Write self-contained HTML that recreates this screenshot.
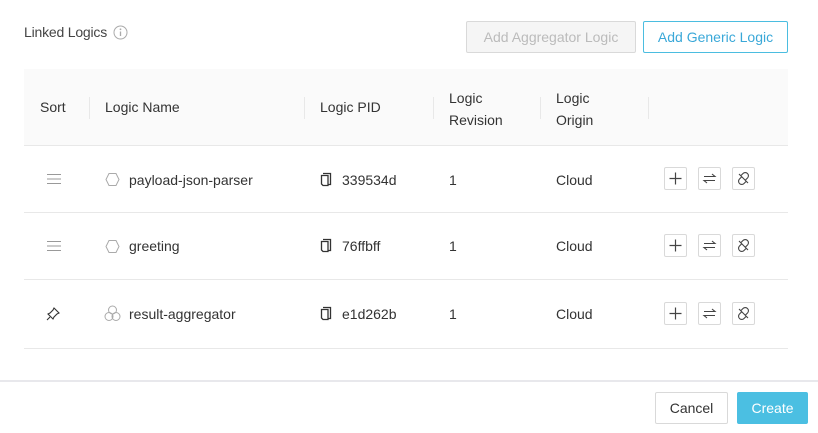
<!DOCTYPE html>
<html><head><style>
*{margin:0;padding:0;box-sizing:border-box}
body{width:818px;height:433px;background:#fff;font-family:"Liberation Sans",sans-serif;font-size:14px;color:#333;position:relative;overflow:hidden}
.a{position:absolute;white-space:nowrap}
.btn{position:absolute;border:1px solid #d9d9d9;border-radius:2px;text-align:center;font-size:14px}
.hd{position:absolute;left:24px;top:69px;width:764px;height:77px;background:#fafafa;border-bottom:1px solid #e8e8e8}
.dv{position:absolute;top:97px;width:1px;height:22px;background:#e8e8e8}
.row{position:absolute;left:24px;width:764px;border-bottom:1px solid #e8e8e8}
.ib{position:absolute;width:23px;height:23px;border:1px solid #d9d9d9;border-radius:2px;background:#fff}
</style></head><body>
<div class="a" style="left:24px;top:24px;font-size:14px;color:#444;letter-spacing:-0.2px">Linked Logics</div>
<svg class="a" style="left:113px;top:25px" width="15" height="15" viewBox="0 0 15 15"><circle cx="7.5" cy="7.5" r="6.5" fill="none" stroke="#aaa"/><line x1="7.5" y1="6.5" x2="7.5" y2="11" stroke="#aaa" stroke-width="1.3"/><circle cx="7.5" cy="4.3" r=".9" fill="#aaa"/></svg>
<div class="btn" style="left:466px;top:21px;width:170px;height:32px;line-height:30px;background:#f5f5f5;color:#bbb">Add Aggregator Logic</div>
<div class="btn" style="left:643px;top:21px;width:145px;height:32px;line-height:30px;border-color:#4bbde0;color:#3aa8d8">Add Generic Logic</div>
<div class="hd"></div>
<div class="a" style="left:40px;top:99px">Sort</div>
<div class="dv" style="left:89px"></div>
<div class="a" style="left:105px;top:99px">Logic Name</div>
<div class="dv" style="left:304px"></div>
<div class="a" style="left:320px;top:99px">Logic PID</div>
<div class="dv" style="left:433px"></div>
<div class="a" style="left:449px;top:87px;line-height:22px">Logic<br>Revision</div>
<div class="dv" style="left:540px"></div>
<div class="a" style="left:556px;top:87px;line-height:22px">Logic<br>Origin</div>
<div class="dv" style="left:648px"></div>

<div class="row" style="top:146px;height:67px"></div>
<div class="row" style="top:213px;height:67px"></div>
<div class="row" style="top:280px;height:69px"></div>

<svg class="a" style="left:47px;top:173px" width="14" height="12"><path d="M0 1.5h14M0 6h14M0 10.5h14" stroke="#999"/></svg>
<svg class="a" style="left:47px;top:240px" width="14" height="12"><path d="M0 1.5h14M0 6h14M0 10.5h14" stroke="#999"/></svg>
<svg class="a" style="left:46px;top:307px" width="14" height="14" viewBox="0 0 14 14"><path d="M8 1l5 5-2 1-3 3-1 2-5-5 2-1 3-3zM4 10l-3 3" fill="none" stroke="#333" stroke-width="1.1"/></svg>

<svg class="a" style="left:105px;top:172px" width="15" height="15" viewBox="0 0 15 15"><path d="M4 1.5h7l3 6-3 6H4l-3-6z" fill="none" stroke="#aaa"/></svg>
<svg class="a" style="left:105px;top:239px" width="15" height="15" viewBox="0 0 15 15"><path d="M4 1.5h7l3 6-3 6H4l-3-6z" fill="none" stroke="#aaa"/></svg>
<svg class="a" style="left:104px;top:305px" width="17" height="17" viewBox="0 0 17 17"><circle cx="8.5" cy="5" r="4" fill="none" stroke="#aaa"/><circle cx="5" cy="11.5" r="4" fill="none" stroke="#aaa"/><circle cx="12" cy="11.5" r="4" fill="none" stroke="#aaa"/></svg>
<div class="a" style="left:129px;top:172px">payload-json-parser</div>
<div class="a" style="left:129px;top:238px">greeting</div>
<div class="a" style="left:129px;top:306px">result-aggregator</div>

<svg class="a" style="left:320px;top:172px" width="12" height="15" viewBox="0 0 12 15"><path d="M3 1.5h7.5v11h-2M1.5 3.5h6.5v10H3l-1.5-1.5z" fill="none" stroke="#333" stroke-width="1.3"/></svg>
<svg class="a" style="left:320px;top:238px" width="12" height="15" viewBox="0 0 12 15"><path d="M3 1.5h7.5v11h-2M1.5 3.5h6.5v10H3l-1.5-1.5z" fill="none" stroke="#333" stroke-width="1.3"/></svg>
<svg class="a" style="left:320px;top:306px" width="12" height="15" viewBox="0 0 12 15"><path d="M3 1.5h7.5v11h-2M1.5 3.5h6.5v10H3l-1.5-1.5z" fill="none" stroke="#333" stroke-width="1.3"/></svg>
<div class="a" style="left:342px;top:172px">339534d</div>
<div class="a" style="left:342px;top:238px">76ffbff</div>
<div class="a" style="left:342px;top:306px">e1d262b</div>

<div class="a" style="left:449px;top:172px">1</div>
<div class="a" style="left:449px;top:238px">1</div>
<div class="a" style="left:449px;top:306px">1</div>
<div class="a" style="left:556px;top:172px">Cloud</div>
<div class="a" style="left:556px;top:238px">Cloud</div>
<div class="a" style="left:556px;top:306px">Cloud</div>

<div class="ib" style="left:664px;top:167px"></div><div class="ib" style="left:698px;top:167px"></div><div class="ib" style="left:732px;top:167px"></div>
<div class="ib" style="left:664px;top:234px"></div><div class="ib" style="left:698px;top:234px"></div><div class="ib" style="left:732px;top:234px"></div>
<div class="ib" style="left:664px;top:302px"></div><div class="ib" style="left:698px;top:302px"></div><div class="ib" style="left:732px;top:302px"></div>
<svg class="a" style="left:664px;top:167px" width="800" height="160">
<defs>
<g id="p"><path d="M11.5 5.5v12M5.5 11.5h12" stroke="#444" stroke-width="1.2"/></g>
<g id="s"><path d="M6 9.5h11l-3-2.5M17 13.5H6l3 2.5" fill="none" stroke="#444" stroke-width="1.1"/></g>
<g id="u"><path d="M9 8.5l2-2a3 3 0 0 1 4.5 4.5l-2 2M14 14.5l-2 2a3 3 0 0 1-4.5-4.5l2-2M7 7l9 9" fill="none" stroke="#444" stroke-width="1.1"/></g>
</defs>
<use href="#p"/><use href="#s" x="34"/><use href="#u" x="68"/>
<use href="#p" y="67"/><use href="#s" x="34" y="67"/><use href="#u" x="68" y="67"/>
<use href="#p" y="135"/><use href="#s" x="34" y="135"/><use href="#u" x="68" y="135"/>
</svg>

<div class="a" style="left:0;top:380px;width:818px;height:2px;background:#e8e8ec"></div>
<div class="btn" style="left:655px;top:392px;width:73px;height:32px;line-height:30px;color:#333">Cancel</div>
<div class="btn" style="left:737px;top:392px;width:71px;height:32px;line-height:30px;background:#4bbfe2;border-color:#4bbfe2;color:#fff">Create</div>
</body></html>
